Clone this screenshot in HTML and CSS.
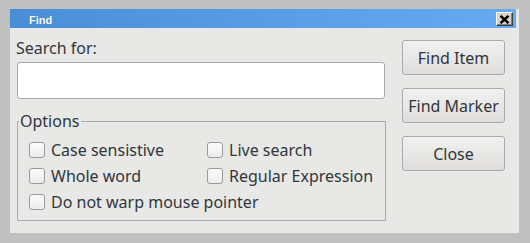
FILE: index.html
```html
<!DOCTYPE html>
<html>
<head>
<meta charset="utf-8">
<link rel="stylesheet" href="styles.css">
</head>
<body>
<div class="dialog">
  <div class="titlebar">
    <span class="title">Find</span>
    <button class="close" aria-label="Close">
      <svg width="11" height="9" viewBox="0 0 11 9"><path d="M1.5 0.8 L9.5 8.2 M9.5 0.8 L1.5 8.2" stroke="#000" stroke-width="2.4"/></svg>
    </button>
  </div>
  <div class="body">
    <div class="main">
      <label class="label">Search for:</label>
      <input class="search" type="text">
      <fieldset class="group">
        <legend class="legend">Options</legend>
        <div class="opts">
          <label class="opt"><span class="box"></span>Case sensistive</label>
          <label class="opt"><span class="box"></span>Live search</label>
          <label class="opt"><span class="box"></span>Whole word</label>
          <label class="opt"><span class="box"></span>Regular Expression</label>
          <label class="opt wide"><span class="box"></span>Do not warp mouse pointer</label>
        </div>
      </fieldset>
    </div>
    <div class="buttons">
      <button class="btn">Find Item</button>
      <button class="btn">Find Marker</button>
      <button class="btn">Close</button>
    </div>
  </div>
</div>
</body>
</html>
```
FILE: styles.css
```css
html, body {
  margin: 0;
  padding: 0;
  background: #c0c0c0;
}
body {
  width: 530px;
  height: 243px;
  overflow: hidden;
}
.dialog {
  margin: 9px 0 0 10px;
  width: 509px;
  height: 224px;
  background: #e8e8e7;
  display: flex;
  flex-direction: column;
}
.titlebar {
  height: 19px;
  margin-right: 3px;
  background: linear-gradient(to right, #4a8ed8, #65aaf2);
  display: flex;
  align-items: center;
  justify-content: space-between;
}
.title {
  font-family: "Liberation Sans", Arial, sans-serif;
  font-weight: bold;
  font-size: 11px;
  color: #fff;
  margin-left: 19px;
  margin-top: 3px;
  text-shadow: 0 0 1px rgba(40, 70, 140, 0.6);
}
.close {
  width: 17px;
  height: 14px;
  margin-right: 3px;
  margin-top: 1px;
  padding: 0;
  background: #d6d3cc;
  border: 1px solid;
  border-color: #fff #404040 #404040 #fff;
  box-shadow: inset -1px -1px 0 #808080;
  display: flex;
  align-items: center;
  justify-content: center;
}
.close svg { display: block; }
.body {
  flex: 1;
  display: flex;
  gap: 17px;
  padding: 10px 14px 0 7px;
  font-family: "Noto Sans", "Open Sans", sans-serif;
  font-size: 16px;
  line-height: 20px;
  color: #31363b;
}
.main {
  width: 368px;
  display: flex;
  flex-direction: column;
}
.label {
  display: block;
  height: 20px;
  margin-left: -1px;
}
.search {
  box-sizing: border-box;
  margin: 4px 0 0 0;
  width: 368px;
  height: 37px;
  background: #fff;
  border: 1px solid #a9a9a9;
  border-radius: 3px;
  outline: none;
}
.group {
  box-sizing: border-box;
  margin: 12px 0 0 0;
  width: 369px;
  padding: 6px 0 5px 11px;
  border: 1px solid #aaaaaa;
  min-width: 0;
}
.legend {
  padding: 0 2px 0 1px;
  margin-left: -10px;
  line-height: 20px;
}
.opts {
  display: grid;
  grid-template-columns: 178px 1fr;
  grid-auto-rows: 26px;
}
.opt {
  display: flex;
  align-items: center;
  gap: 6px;
  white-space: nowrap;
}
.opt.wide { grid-column: 1 / 3; }
.box {
  box-sizing: border-box;
  width: 16px;
  height: 16px;
  border: 1px solid #9a9a9a;
  border-radius: 3px;
  background: linear-gradient(#fbfbfb, #ececec);
  flex: none;
}
.buttons {
  margin-top: 2px;
  display: flex;
  flex-direction: column;
  gap: 13px;
}
.btn {
  box-sizing: border-box;
  width: 103px;
  height: 35px;
  padding: 0;
  border: 1px solid #aaaaaa;
  border-radius: 3px;
  background: linear-gradient(#f1f1f0, #dedddb);
  font-family: "Noto Sans", "Open Sans", sans-serif;
  font-size: 16px;
  color: #31363b;
}
```
